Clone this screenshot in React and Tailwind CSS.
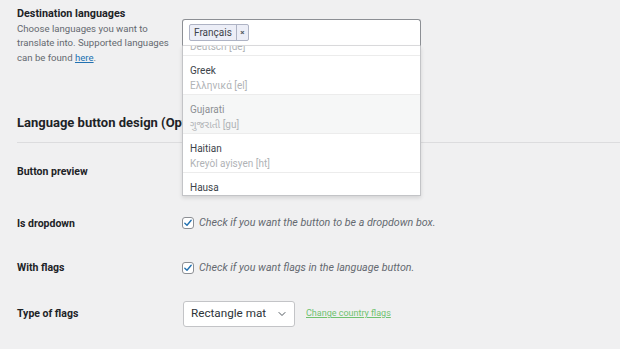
import React from 'react';
import { ChevronDown } from 'lucide-react';

const languages = [
  { name: 'Deutsch', native: 'Deutsch [de]' },
  { name: 'Greek', native: 'Ελληνικά [el]' },
  { name: 'Gujarati', native: 'ગુજરાતી [gu]', active: true },
  { name: 'Haitian', native: 'Kreyòl ayisyen [ht]' },
  { name: 'Hausa', native: 'Hausa [ha]' },
];

function Checkbox() {
  return (
    <span className="flex h-[12px] w-[12px] shrink-0 items-center justify-center rounded-[3px] border border-[#8c8f94] bg-white">
      <svg viewBox="0 0 12 12" className="h-[10px] w-[10px]">
        <path d="M2.2 6.2 L4.8 8.6 L9.8 2.8" fill="none" stroke="#2271b1" strokeWidth="1.7" strokeLinecap="round" strokeLinejoin="round" />
      </svg>
    </span>
  );
}

export default function App() {
  return (
    <div className="h-[349px] w-[620px] overflow-hidden bg-[#f0f0f1] text-[10.5px] text-[#1d2327]" style={{ fontFamily: 'Roboto, "Noto Sans", "Noto Sans Gujarati", sans-serif' }}>
      {/* Destination languages */}
      <div className="flex pl-[17px] pt-[7px]">
        <div className="w-[165px] shrink-0">
          <p className="text-[10.8px] font-bold leading-[14px]">Destination languages</p>
          <p className="mt-[1px] text-[9.6px] leading-[14.3px] text-[#646970]">
            Choose languages you want to translate into. Supported languages can be found{' '}
            <a href="#" className="text-[#2271b1] underline">here</a>.
          </p>
        </div>
        <div className="relative mt-[12px] h-[27px] w-[239px]">
          <div className="flex h-[27px] items-center rounded-t-[3px] border border-[#8c8f94] border-b-[#dcdcde] bg-white px-[6px]">
            <span className="flex h-[17px] items-stretch rounded-[2px] border border-[#aeb3c4] bg-[#eceef7] text-[10px] text-[#3c434a]">
              <span className="flex items-center px-[4px]">Français</span>
              <span className="flex w-[12px] items-center justify-center border-l border-[#aeb3c4] text-[8px] font-bold text-[#50575e]">×</span>
            </span>
          </div>
          {/* Options list */}
          <div className="absolute left-0 top-[27px] z-10 h-[150px] w-[239px] overflow-hidden border border-t-0 border-[#c3c4c7] bg-white text-[10px] shadow-[0_2px_4px_rgba(0,0,0,0.12)]">
            <div className="-mt-[29px]">
              {languages.map((l) => (
                <div key={l.name} className={`h-[39px] border-b border-[#ececec] px-[7px] pt-[7px] ${l.active ? 'bg-[#f6f7f7]' : ''}`}>
                  <p className={`leading-[15px] ${l.active ? 'text-[#8c8f94]' : 'text-[#3c434a]'}`}>{l.name}</p>
                  <p className="leading-[15px] text-[#b0b3b6]">{l.native}</p>
                </div>
              ))}
            </div>
          </div>
        </div>
      </div>

      {/* Section heading */}
      <h2 className="mt-[50px] pl-[17px] text-[13px] font-bold leading-[16px]">Language button design (Optional)</h2>
      <div className="ml-[17px] mt-[11px] border-t border-[#dcdcde]" />

      {/* Settings rows */}
      <div className="pl-[17px]">
        <div className="flex h-[57px] items-center">
          <span className="w-[165px] font-bold">Button preview</span>
        </div>
        <div className="flex h-[47px] items-center">
          <span className="w-[165px] font-bold">Is dropdown</span>
          <Checkbox />
          <span className="ml-[5px] text-[10.7px] italic text-[#646970]">Check if you want the button to be a dropdown box.</span>
        </div>
        <div className="flex h-[42px] items-center">
          <span className="w-[165px] font-bold">With flags</span>
          <Checkbox />
          <span className="ml-[5px] text-[10.7px] italic text-[#646970]">Check if you want flags in the language button.</span>
        </div>
        <div className="flex h-[50px] items-center">
          <span className="w-[166px] font-bold">Type of flags</span>
          <div className="flex h-[26px] w-[112px] items-center justify-between rounded-[3px] border border-[#c3c4c7] bg-white pl-[7px] pr-[6px] text-[11.7px] text-[#2c3338]">
            <span>Rectangle mat</span>
            <ChevronDown className="h-[12px] w-[12px] text-[#50575e]" strokeWidth={2} />
          </div>
          <a href="#" className="ml-[11px] text-[9px] text-[#6fc26f] underline">Change country flags</a>
        </div>
      </div>
    </div>
  );
}
